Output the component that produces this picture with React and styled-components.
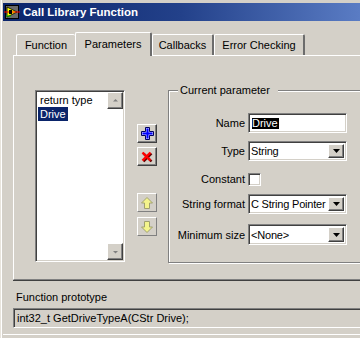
import React from 'react'
import styled, { createGlobalStyle, css } from 'styled-components'

const GlobalStyle = createGlobalStyle`
  html, body {
    margin: 0;
    padding: 0;
    background: #d4d0c8;
  }
  body {
    font-family: "Liberation Sans", Arial, sans-serif;
    font-size: 11px;
    color: #000;
  }
`

const raised = css`
  border: 1px solid;
  border-color: #fff #404040 #404040 #fff;
  box-shadow: inset -1px -1px 0 #808080;
`

const sunken = css`
  border: 1px solid;
  border-color: #808080 #fff #fff #808080;
  box-shadow: inset 1px 1px 0 #404040, inset -1px -1px 0 #d4d0c8;
`

const Window = styled.div`
  width: 360px;
  height: 338px;
  overflow: hidden;
  box-sizing: border-box;
  background: #d4d0c8;
  border-left: 1px solid #e8e4dc;
  box-shadow: inset 1px 0 0 #fff;
  padding: 3px 0 0 2px;
`

const Inner = styled.div`
  width: 420px;
`

const TitleBar = styled.div`
  height: 18px;
  width: 357px;
  display: flex;
  align-items: center;
  gap: 3px;
  padding-left: 1px;
  box-sizing: border-box;
  background: linear-gradient(90deg, #0a246a 0%, #23418a 50%, #5a7cc4 100%);
`

const TitleText = styled.span`
  color: #fff;
  font-weight: bold;
  font-size: 11.5px;
`

const TabStrip = styled.div`
  position: relative;
  z-index: 1;
  display: flex;
  align-items: flex-end;
  height: 24px;
  margin-top: 11px;
  margin-bottom: -1px;
  padding-left: 13px;
`

const Tab = styled.div`
  box-sizing: border-box;
  width: ${p => p.$w}px;
  height: ${p => (p.$active ? 24 : 21)}px;
  margin-bottom: ${p => (p.$active ? 0 : 1)}px;
  display: flex;
  align-items: center;
  justify-content: center;
  padding-bottom: ${p => (p.$active ? 2 : 0)}px;
  background: #d4d0c8;
  border-top: 1px solid #fff;
  border-left: 1px solid #fff;
  border-right: ${p => (p.$last || p.$active || p.$sep ? '2px solid #6c6c6c' : 'none')};
  border-radius: 2px 2px 0 0;
`

const Panel = styled.div`
  box-sizing: border-box;
  height: 225px;
  margin-left: 10px;
  border-top: 1px solid #fff;
  border-left: 1px solid #fff;
  border-bottom: 1px solid #808080;
  box-shadow: 0 1px 0 #404040;
  display: flex;
  align-items: flex-start;
  padding: 28px 0 0 21px;
`

const ListBox = styled.div`
  ${sunken};
  box-sizing: border-box;
  width: 90px;
  height: 172px;
  margin-top: 6px;
  padding: 1px;
  background: #fff;
  display: flex;
`

const ListItems = styled.div`
  flex: 1;
  padding-top: 1px;
`

const ListItem = styled.div`
  line-height: 14px;
  height: 14px;
`

const ItemText = styled.span`
  display: inline-block;
  margin-left: 1px;
  padding: 0 2px;
  background: ${p => (p.$selected ? '#0a246a' : 'transparent')};
  color: ${p => (p.$selected ? '#fff' : '#000')};
`

const ScrollBar = styled.div`
  width: 16px;
  display: flex;
  flex-direction: column;
  justify-content: space-between;
  background: #fff;
`

const ScrollButton = styled.div`
  ${raised};
  box-sizing: border-box;
  width: 16px;
  height: 17px;
  background: #d4d0c8;
  display: flex;
  align-items: center;
  justify-content: center;
`

const ButtonColumn = styled.div`
  display: flex;
  flex-direction: column;
  margin: 40px 11px 0 12px;
`

const ToolButton = styled.div`
  ${raised};
  ${p =>
    p.$disabled &&
    css`
      border-color: #fff #808080 #808080 #fff;
      box-shadow: none;
    `}
  box-sizing: border-box;
  width: 20px;
  height: 19px;
  margin-top: ${p => p.$mt || 0}px;
  background: #d4d0c8;
  display: flex;
  align-items: center;
  justify-content: center;
`

const GroupBox = styled.fieldset`
  box-sizing: border-box;
  width: 220px;
  height: 179px;
  margin: 0;
  padding: 0;
  border: 1px solid #808080;
  box-shadow: inset 1px 1px 0 #fff, 1px 1px 0 #fff;
`

const GroupLegend = styled.legend`
  margin-left: 9px;
  padding: 0 8px 0 2px;
  line-height: 13px;
  background: #d4d0c8;
`

const Field = styled.div`
  display: grid;
  grid-template-columns: 76px 99px;
  column-gap: 3px;
  align-items: center;
  height: ${p => p.$h || 20}px;
  margin-top: ${p => p.$mt}px;
`

const FieldLabel = styled.span`
  text-align: right;
`

const TextBox = styled.div`
  ${sunken};
  box-sizing: border-box;
  height: 20px;
  padding: 1px 1px 1px 3px;
  background: #fff;
  display: flex;
  align-items: center;
`

const Selected = styled.span`
  background: #000;
  color: #fff;
  line-height: 11px;
  padding: 0 1px 0 0;
`

const Select = styled.div`
  ${sunken};
  box-sizing: border-box;
  height: ${p => p.$h || 20}px;
  padding: 2px;
  background: #fff;
  display: flex;
  align-items: center;
  justify-content: space-between;
`

const SelectValue = styled.span`
  white-space: nowrap;
  letter-spacing: -0.2px;
`

const DropButton = styled.div`
  ${raised};
  box-sizing: border-box;
  flex: none;
  width: 16px;
  height: 100%;
  background: #d4d0c8;
  display: flex;
  align-items: center;
  justify-content: center;
`

const Checkbox = styled.div`
  ${sunken};
  box-sizing: border-box;
  width: 13px;
  height: 13px;
  background: #fff;
`

const ProtoLabel = styled.div`
  margin: 11px 0 4px 13px;
  line-height: 13px;
`

const ProtoBox = styled.div`
  box-sizing: border-box;
  height: 20px;
  margin-left: 10px;
  padding-left: 3px;
  border-top: 1px solid #808080;
  border-left: 1px solid #808080;
  border-bottom: 1px solid #fff;
  box-shadow: inset 1px 1px 0 #404040;
  display: flex;
  align-items: center;
`

const BottomEdge = styled.div`
  margin-top: 6px;
  height: 1px;
  background: #fff;
`

const AppIcon = () => (
  <svg width="16" height="16" viewBox="0 0 16 16">
    <rect x="1.5" y="1.5" width="13" height="13" fill="#6a6a6a" stroke="#000" />
    <polygon points="3,3 13,8 3,13" fill="#ffff00" stroke="#000" strokeWidth="0.8" />
    <line x1="0" y1="8" x2="16" y2="8" stroke="#ff0000" strokeWidth="1" />
    <line x1="2" y1="12" x2="7" y2="12" stroke="#00c000" strokeWidth="1" />
    <rect x="5" y="6" width="3" height="4" fill="#000" />
  </svg>
)

const SmallArrow = ({ down }) => (
  <svg width="7" height="5" viewBox="0 0 7 5">
    <polygon
      points={down ? '1,2 6,2 3.5,4.5' : '1,3.5 6,3.5 3.5,1'}
      fill="#808080"
    />
  </svg>
)

const DropArrow = () => (
  <svg width="7" height="4" viewBox="0 0 7 4">
    <polygon points="0,0 7,0 3.5,4" fill="#000" />
  </svg>
)

const PlusIcon = () => (
  <svg width="13" height="13" viewBox="0 0 13 13">
    <polygon
      points="4.5,0.5 8.5,0.5 8.5,4.5 12.5,4.5 12.5,8.5 8.5,8.5 8.5,12.5 4.5,12.5 4.5,8.5 0.5,8.5 0.5,4.5 4.5,4.5"
      fill="#c8c8ff"
      stroke="#000060"
    />
    <rect x="5.5" y="1.5" width="2" height="10" fill="#0000ff" />
    <rect x="1.5" y="5.5" width="10" height="2" fill="#0000ff" />
  </svg>
)

const CrossIcon = () => (
  <svg width="12" height="12" viewBox="0 0 12 12">
    <line x1="2.5" y1="2.5" x2="10.5" y2="10.5" stroke="#600000" strokeWidth="2.4" />
    <line x1="10.5" y1="2.5" x2="2.5" y2="10.5" stroke="#600000" strokeWidth="2.4" />
    <line x1="1.5" y1="1.5" x2="9.5" y2="9.5" stroke="#ff0000" strokeWidth="2.4" />
    <line x1="9.5" y1="1.5" x2="1.5" y2="9.5" stroke="#ff0000" strokeWidth="2.4" />
  </svg>
)

const ArrowIcon = ({ down }) => (
  <svg width="12" height="12" viewBox="0 0 12 12">
    <polygon
      points="6,0.5 11.5,6 8.5,6 8.5,11.5 3.5,11.5 3.5,6 0.5,6"
      fill="#f4f48c"
      stroke="#a0a070"
      transform={down ? 'rotate(180 6 6)' : undefined}
    />
  </svg>
)

const tabs = [
  { label: 'Function', w: 59 },
  { label: 'Parameters', w: 77, active: true },
  { label: 'Callbacks', w: 62, sep: true },
  { label: 'Error Checking', w: 91, last: true },
]

export default function App() {
  return (
    <>
      <GlobalStyle />
      <Window>
        <Inner>
          <TitleBar>
            <AppIcon />
            <TitleText>Call Library Function</TitleText>
          </TitleBar>

          <TabStrip>
            {tabs.map(t => (
              <Tab key={t.label} $w={t.w} $active={t.active} $sep={t.sep} $last={t.last}>
                {t.label}
              </Tab>
            ))}
          </TabStrip>

          <Panel>
            <ListBox>
              <ListItems>
                <ListItem>
                  <ItemText>return type</ItemText>
                </ListItem>
                <ListItem>
                  <ItemText $selected>Drive</ItemText>
                </ListItem>
              </ListItems>
              <ScrollBar>
                <ScrollButton>
                  <SmallArrow />
                </ScrollButton>
                <ScrollButton>
                  <SmallArrow down />
                </ScrollButton>
              </ScrollBar>
            </ListBox>

            <ButtonColumn>
              <ToolButton>
                <PlusIcon />
              </ToolButton>
              <ToolButton $mt={4}>
                <CrossIcon />
              </ToolButton>
              <ToolButton $mt={27} $disabled>
                <ArrowIcon />
              </ToolButton>
              <ToolButton $mt={5} $disabled>
                <ArrowIcon down />
              </ToolButton>
            </ButtonColumn>

            <GroupBox>
              <GroupLegend>Current parameter</GroupLegend>
              <Field $mt={16}>
                <FieldLabel>Name</FieldLabel>
                <TextBox>
                  <Selected>Drive</Selected>
                </TextBox>
              </Field>
              <Field $mt={8}>
                <FieldLabel>Type</FieldLabel>
                <Select>
                  <SelectValue>String</SelectValue>
                  <DropButton>
                    <DropArrow />
                  </DropButton>
                </Select>
              </Field>
              <Field $mt={8}>
                <FieldLabel>Constant</FieldLabel>
                <Checkbox />
              </Field>
              <Field $mt={5}>
                <FieldLabel>String format</FieldLabel>
                <Select>
                  <SelectValue>C String Pointer</SelectValue>
                  <DropButton>
                    <DropArrow />
                  </DropButton>
                </Select>
              </Field>
              <Field $mt={10} $h={21}>
                <FieldLabel>Minimum size</FieldLabel>
                <Select $h={21}>
                  <SelectValue>&lt;None&gt;</SelectValue>
                  <DropButton>
                    <DropArrow />
                  </DropButton>
                </Select>
              </Field>
            </GroupBox>
          </Panel>

          <ProtoLabel>Function prototype</ProtoLabel>
          <ProtoBox>int32_t GetDriveTypeA(CStr Drive);</ProtoBox>
          <BottomEdge />
        </Inner>
      </Window>
    </>
  )
}
